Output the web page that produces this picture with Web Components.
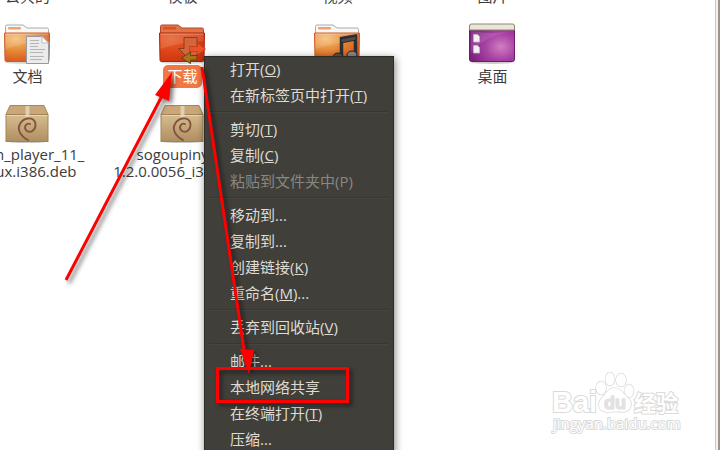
<!DOCTYPE html>
<html lang="zh-CN">
<head>
<meta charset="utf-8">
<title>文件</title>
<style>
html,body{margin:0;height:100%;overflow:hidden;background:#fff}
body{font-family:"Open Sans","Noto Sans CJK SC",sans-serif;font-size:15px;color:#3c3c3c}
</style>
</head>
<body>
<file-window></file-window>

<template id="t-window">
<style>
:host{display:flex;position:relative;height:100vh;overflow:hidden;background:#fff}
.files{flex:1;min-width:0;display:grid;grid-template-columns:repeat(auto-fill,155px);grid-auto-rows:80px;margin:-59px 0 0 -50px;align-content:start}
.edge{width:1px;border-left:1px solid #cdc9c2;border-right:2px solid #9c948b;background:#f2f1f0;flex:none;padding-right:1px}
context-menu{position:absolute;left:204px;top:56px}
water-mark{position:absolute;right:38px;bottom:12px}
mark-up{position:absolute;left:0;top:0}
</style>
<main class="files">
<file-item kind="folder">公共的</file-item>
<file-item kind="folder">模板</file-item>
<file-item kind="folder">视频</file-item>
<file-item kind="folder">图片</file-item>
<file-item kind="documents">文档</file-item>
<file-item kind="downloads" selected>下载</file-item>
<file-item kind="music">音乐</file-item>
<file-item kind="desktop">桌面</file-item>
<file-item kind="package">flash_player_11_<br>linux.i386.deb</file-item>
<file-item kind="package">sogoupinyin_<br>1.2.0.0056_i386.deb</file-item>
</main>
<div class="edge"></div>
<water-mark></water-mark>
<context-menu>
<menu-item>打开(<u>O</u>)</menu-item>
<menu-item>在新标签页中打开(<u>T</u>)</menu-item>
<menu-line></menu-line>
<menu-item>剪切(<u>T</u>)</menu-item>
<menu-item>复制(<u>C</u>)</menu-item>
<menu-item disabled>粘贴到文件夹中(P)</menu-item>
<menu-line></menu-line>
<menu-item>移动到...</menu-item>
<menu-item>复制到...</menu-item>
<menu-item>创建链接(<u>K</u>)</menu-item>
<menu-item>重命名(<u>M</u>)...</menu-item>
<menu-line></menu-line>
<menu-item>丢弃到回收站(<u>V</u>)</menu-item>
<menu-line></menu-line>
<menu-item>邮件...</menu-item>
<menu-item>本地网络共享</menu-item>
<menu-item>在终端打开(<u>T</u>)</menu-item>
<menu-item>压缩...</menu-item>
</context-menu>
<mark-up></mark-up>
</template>

<template id="t-file">
<style>
:host{display:flex;flex-direction:column;align-items:center;white-space:nowrap;text-align:center}
svg{display:block;width:48px;height:44px;flex:none}
:host([kind="package"]) svg{height:42px}
.label{line-height:17px;padding:3px 4px;border-radius:5px}
:host([selected]) .label{background:#f07746;color:#fff}
</style>
<span class="icon"></span><span class="label"><slot></slot></span>
</template>

<template id="t-menu">
<style>
:host{display:flex;flex-direction:column;box-sizing:border-box;width:190px;background:#403f3a;border:1px solid #2c2b28;color:#dfdbd2;box-shadow:1px 2px 8px rgba(0,0,0,.5)}
</style>
<slot></slot>
</template>

<template id="t-item">
<style>
:host{display:block}
button{display:block;width:100%;height:26px;margin:0;padding:0 0 2px 25px;border:0;background:none;color:inherit;font:inherit;line-height:24px;text-align:left;white-space:nowrap}
button:disabled{color:#8a8780}
</style>
<button type="button"><slot></slot></button>
</template>

<template id="t-line">
<style>
:host{display:block;height:8px;padding:2px 5px 0 4px;box-sizing:border-box}
div{height:1px;background:#383732;border-bottom:1px solid #474640}
</style>
<div></div>
</template>

<template id="t-water">
<style>:host{display:block}svg{display:block}</style>
<svg width="132" height="66" viewBox="550 372 132 66" fill="#fff" stroke="#dadada" stroke-width="2" paint-order="stroke" font-family="'Liberation Sans','Noto Sans CJK SC',sans-serif">
<text x="552" y="412" font-size="29" font-weight="bold">Bai</text>
<g stroke-width="1.500">
<ellipse cx="601" cy="388" rx="5" ry="6.500"/><ellipse cx="610" cy="379" rx="4.500" ry="6.500"/><ellipse cx="621" cy="380" rx="5" ry="6.500"/><ellipse cx="629" cy="391" rx="4.500" ry="6.500"/>
<path d="M614 388c-6 0-8 6-12 10-5 5-4 14 5 14 4 0 10-1 15 0 9 0 11-8 7-13-5-4-8-11-15-11z"/>
</g>
<text x="604" y="409" font-size="18" stroke-width="1" fill="#e2e2e2" font-weight="bold">du</text>
<text x="634" y="411" font-size="22" font-weight="bold">经验</text>
<text x="553" y="429" font-size="15" font-family="'Open Sans',sans-serif">jingyan.baidu.com</text>
</svg>
</template>

<template id="t-markup">
<style>:host{display:block;pointer-events:none}
svg{display:block;filter:drop-shadow(3px 3px 2px rgba(0,0,0,.5))}</style>
<svg width="400" height="450" viewBox="0 0 400 450" fill="none" stroke="#f00" stroke-width="3">
<path d="M66 280 164 92M202 67 244 350"/>
<path d="M172 72 155 95 169 101ZM249 374 240 349 254 350Z" fill="#f00" stroke="none"/>
<path d="M217.500 368.500H347.500V401.500H217.500Z"/>
</svg>
</template>

<script>
const folder = (body, edge, tab, deco) => `
<svg viewBox="1 0 48 44"><defs>
<radialGradient id="f" cx=".25" cy=".2" r="1"><stop offset="0" stop-color="${body[0]}"/><stop offset=".5" stop-color="${body[1]}"/><stop offset="1" stop-color="${body[2]}"/></radialGradient></defs>
<ellipse cx="24" cy="41.500" rx="22" ry="1.500" fill="#000" opacity=".16"/>
<path d="M2.500 14V5.500q0-1.500 1.500-1.500H20l4 3H44q1.500 0 1.500 1.500V14z" fill="${tab[0]}" stroke="${tab[1]}"/>
<rect x="5" y="6" width="13" height="2.500" rx="1" fill="${tab[2]}"/>
<path d="M1.500 12H46.500L46 39q0 1.500-1.500 1.500H3.500Q2 40.500 2 39z" fill="url(#f)" stroke="${edge}"/>
<path d="M2.500 13H45.500V20Q22 21 2.500 28z" fill="#fff" opacity=".13"/>
<path d="M2.500 13H45.500" stroke="#fff" opacity=".35"/>${deco}</svg>`;
const warm = [['#f5c078', '#e2802f', '#d3441c'], '#cc5a2b', ['#f8f8f8', '#aaa', '#f2a06c']];
const icons = {
folder: folder(...warm, ''),
documents: folder(...warm, `
<path d="M23.500 15.500H39L45.500 22V42.500H23.500z" fill="#ebebeb" stroke="#999"/>
<path d="M39 15.500V22H45.500z" fill="#fff" stroke="#bbb"/>
<path d="M27 19.500h9M27 22.500h9M27 25.500h8M27 28.500h15M27 31.500h13M27 35.500h14M27 38.500h12" stroke="#b5b5b5"/>`),
downloads: folder(['#e5602c', '#dc4317', '#c92c0d'], '#a92708', ['#e27448', '#b2492a', '#dd4f20'], `
<path d="M26 16.500H39V27.500H44.500L32.500 39.500 20.500 27.500H26z" fill="#d2653b" stroke="#8f3b1e"/>
<path d="M31.500 25.500h8v-3.500l8 6-8 6v-3.500h-8z" fill="#ea5229" stroke="#c83a17" stroke-width=".8"/>
<path d="M39 34.500h-6.500v-3.500l-9 6 9 5.500v-3.500H39z" fill="#b0701b" stroke="#5e4711"/>`),
music: folder(...warm, `
<path d="M28.500 35V17.500L42.500 15V33" fill="none" stroke="#2f2f2f" stroke-width="3.500"/>
<path d="M28 18v4l15-3v-4z" fill="#4b4b4b" stroke="#292929"/>
<ellipse cx="25" cy="36" rx="5" ry="4" fill="#555" stroke="#252525"/><ellipse cx="39" cy="34" rx="5" ry="4" fill="#888" stroke="#252525"/>`),
desktop: `<svg viewBox="1 0 48 44"><defs><radialGradient id="d" cx=".7" cy=".6" r=".75"><stop offset="0" stop-color="#cf80c0"/><stop offset=".45" stop-color="#aa43a5"/><stop offset="1" stop-color="#782079"/></radialGradient></defs>
<ellipse cx="24" cy="41.500" rx="21" ry="1.500" fill="#000" opacity=".2"/>
<rect x="1.500" y="3.500" width="45" height="37" rx="2" fill="url(#d)" stroke="#701a6d"/>
<path d="M1.500 9V5q0-2 2-2h41q2 0 2 2v4z" fill="#e9e6d7" stroke="#8e876b"/>
<path d="M3 10Q26 14 43 10Q14 16 3 32z" fill="#fff" opacity=".12"/>
<path d="M5.500 13.500h4l2 2v5.500h-6zM5.500 24.500h4l2 2V32h-6z" fill="#f2f0f2" stroke="#c9b2ca" stroke-width=".8"/></svg>`,
package: `<svg viewBox="1 -2 48 42"><defs><linearGradient id="p" x2="0" y2="1"><stop offset="0" stop-color="#d5bd90"/><stop offset="1" stop-color="#af8f60"/></linearGradient></defs>
<ellipse cx="24" cy="38" rx="22" ry="2" fill="#000" opacity=".22"/>
<path d="M3 11.500 7 2.500H41L45 11.500z" fill="#c9a77a" stroke="#a8875c"/>
<path d="M3 11.500H45V38.500H3z" fill="url(#p)" stroke="#a38355"/>
<path d="M3.500 12.500H44.500" stroke="#e8d5b0"/>
<path d="M22.500 3h4v11h-4z" fill="#e9dcc2" opacity=".75"/>
<path d="M25 37C17 33 14 26 17 21C20 15 29 13 32 19C34 25 29 31 24 28C20 25 23 19 27 21" fill="none" stroke="#825340" stroke-width="1.900" stroke-linecap="round"/></svg>`
};
const define = (name, tpl, setup) => customElements.define(name, class extends HTMLElement {
  constructor() {
    super();
    this.attachShadow({mode: 'open'}).append(document.getElementById(tpl).content.cloneNode(true));
  }
  connectedCallback() { if (setup) setup(this, this.shadowRoot); }
});
define('menu-item', 't-item', (el, root) => { root.querySelector('button').disabled = el.hasAttribute('disabled'); });
define('menu-line', 't-line');
define('context-menu', 't-menu');
define('water-mark', 't-water');
define('mark-up', 't-markup');
define('file-item', 't-file', (el, root) => { root.querySelector('.icon').innerHTML = icons[el.getAttribute('kind')]; });
define('file-window', 't-window');
</script>
</body>
</html>
